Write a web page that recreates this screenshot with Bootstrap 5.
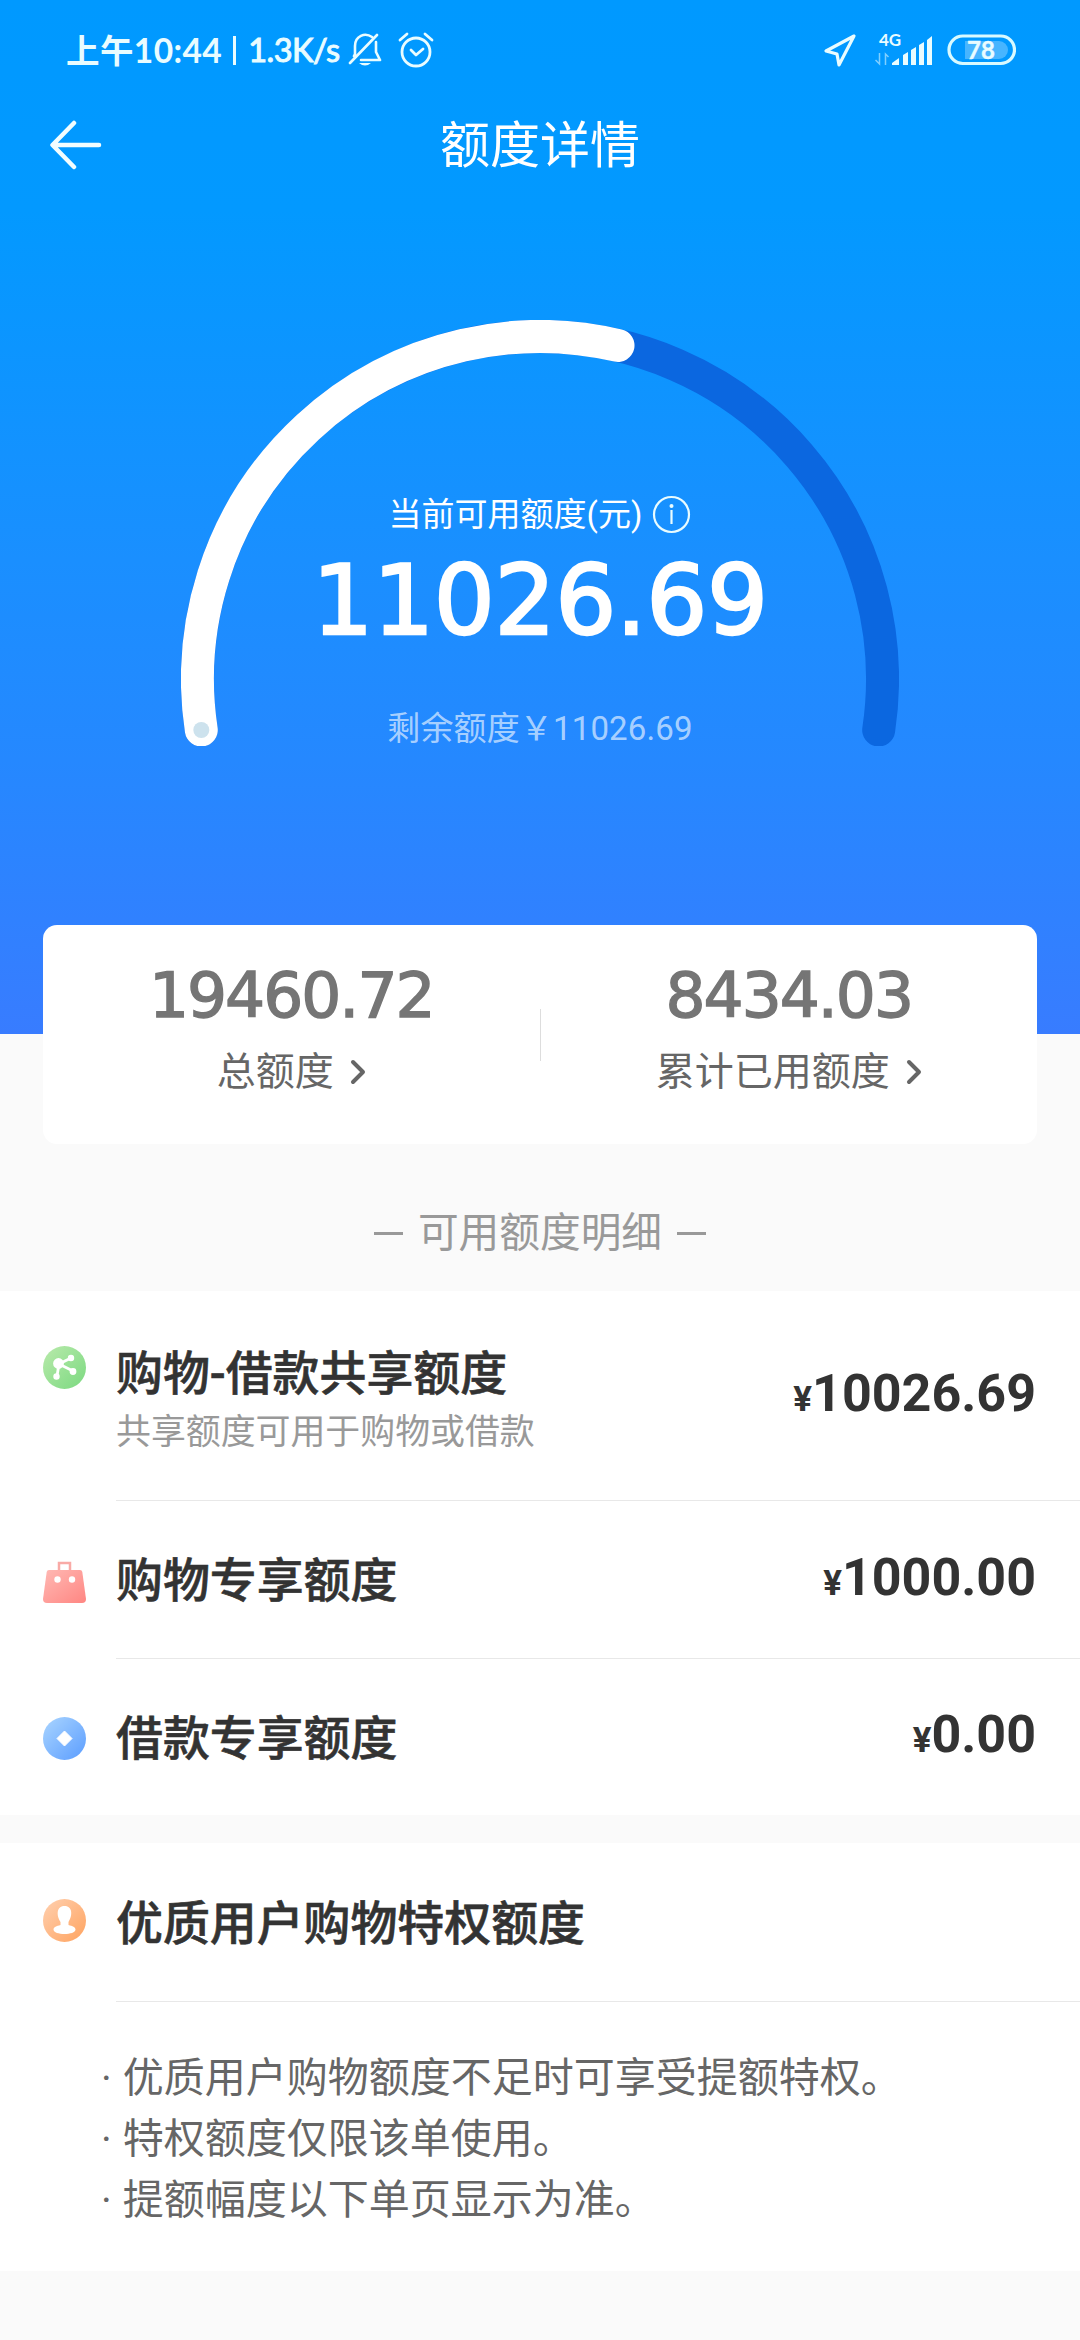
<!DOCTYPE html>
<html lang="zh-CN">
<head>
<meta charset="utf-8">
<meta name="viewport" content="width=device-width, initial-scale=1">
<title>额度详情</title>
<link href="https://cdn.jsdelivr.net/npm/bootstrap@5.3.0/dist/css/bootstrap.min.css" rel="stylesheet">
<style>
body{font-family:Roboto,"Noto Sans CJK SC",sans-serif;background:#fafafa;color:#333;line-height:1;width:1080px;height:2340px;overflow:hidden}
svg{display:block;flex:none}
.hero{height:1034px;background:linear-gradient(#0099ff 0,#0399ff 210px,#1a8fff 560px,#2588ff 760px,#387cff 1034px)}
.status{height:100px;padding:0 64px 0 66px;color:#e9fcff}
.clock{font-family:Lato,"Noto Sans CJK SC",sans-serif;font-size:33.5px;font-weight:700;line-height:40px;letter-spacing:.4px}
.rate{font-family:Lato,sans-serif;font-size:32.5px;line-height:40px;letter-spacing:-.5px;-webkit-text-stroke:1px}
.rule{width:3px;height:29px;margin:0 12px 0 11px;background:#e9fcff}
.net{margin:0 12px 0 18px}
.titlebar{height:90px;padding:0 50px}
.titlebar h1{font-size:50px;font-weight:400;line-height:60px;padding-top:2px}
.gauge{width:718px;height:426px;margin-top:130px}
.gauge-text{margin-top:-251px}
.caption{font-size:33px;line-height:38px;gap:10px}
.din{font-family:"DejaVu Sans",sans-serif;white-space:nowrap}
.total{font-size:96px;line-height:112px;letter-spacing:-.3px;-webkit-text-stroke:2.5px #fff;margin-top:11px}
.remain{font-size:33px;line-height:38px;letter-spacing:.15px;margin-top:53px;color:rgba(255,255,255,.62)}
.summary{width:994px;height:219px;margin:-109px auto 0;border-radius:14px;position:relative}
.stat{padding-top:36px}
.summary .din{font-size:63px;line-height:70px;letter-spacing:-2px;color:#757575;-webkit-text-stroke:1.4px #757575}
.summary-label{font-size:39px;line-height:44px;gap:16px;color:#666;margin-top:19px}
.vline{width:1px;height:52px;background:#ddd;margin-top:84px}
.section-head{height:147px;padding:69px 0 37px;font-size:40.7px;line-height:41px;gap:15px;color:#999}
.dash{width:29px;height:3px;background:#999}
.entry{padding-left:43px;gap:30px}
.entry-body{padding:2px 44px 0 0;height:158px}
.entry-last{height:156px}
.entry-head{height:159px}
.line{border-bottom:1px solid #e8e8e8}
.entry-tall{height:210px}
.share-icon{margin-top:55px}
.bag-icon{margin-top:5px}
.coin-icon{margin-top:3px}
.name{font-size:46.9px;font-weight:500;line-height:56px;padding-top:1px;-webkit-text-stroke:.6px}
.hint{font-size:34.9px;line-height:42px;color:#999;margin:10px 0 -6px}
.amount{font-size:52px;font-weight:700;line-height:60px}
.amount span{font-size:35px}
.gap-band{margin-top:28px}
.notes{height:269px;padding:46px 0 0 101px;font-size:41px;line-height:61px;color:#666;white-space:nowrap}
.notes li{display:flex;gap:11px}
</style>
</head>
<body>
<header class="hero text-white">
  <div class="status d-flex align-items-center">
    <span class="clock">上午10:44</span>
    <i class="rule"></i>
    <span class="rate">1.3K/s</span>
    <svg class="ms-2" width="34" height="34" viewBox="0 0 34 34" fill="none" stroke="currentColor" stroke-width="2.6" stroke-linecap="round" stroke-linejoin="round"><path d="M2 30 29 2M24 4C17-1 7 3 7 13v8l-1 2M28 9v10l4 8H13"/><path d="M11 30h12q-6 5-12 0Z" fill="currentColor" stroke="none"/></svg>
    <svg class="ms-3" width="36" height="36" viewBox="0 0 36 36" fill="none" stroke="currentColor" stroke-width="2.8" stroke-linecap="round" stroke-linejoin="round"><circle cx="18" cy="20" r="14"/><path d="m13 18 5 5 7-6M2 8l7-6M34 8l-7-6"/></svg>
    <div class="ms-auto d-flex align-items-center">
      <svg width="34" height="34" viewBox="0 0 34 34" fill="none" stroke="currentColor" stroke-width="3.2" stroke-linejoin="round"><path d="M31 3 3 18l11 3 2 11Z"/></svg>
      <svg class="net" width="60" height="40" viewBox="0 -4 60 40" fill="currentColor"><text x="4" y="11.500" font-family="Lato,sans-serif" font-weight="700" font-size="17">4G</text><path d="M4.500 19v11l-4-4M10.500 31V20l3 3" fill="none" stroke="currentColor" stroke-width="1.500" opacity=".55"/><path d="M17 31v-2l7-5v7ZM28 31V21l5-3v13ZM36 31V16l5-3v18ZM44 31V11l5-3v23ZM52 31V6l5-4v29Z"/></svg>
      <svg width="69" height="32" viewBox="0 0 69 32"><rect x="2" y="2" width="65.500" height="27.500" rx="13.750" fill="none" stroke="#d9faff" stroke-width="3.200"/><path d="M18 7h34a9 9 0 0 1 0 18H18Z" fill="#fff" opacity=".28"/><text x="34" y="24.500" text-anchor="middle" font-family="Lato,sans-serif" font-weight="700" font-size="24" stroke="#e9fcff" stroke-width=".4" fill="#e9fcff">78</text></svg>
    </div>
  </div>
  <div class="titlebar d-flex align-items-center justify-content-between">
    <svg width="52" height="50" viewBox="0 0 52 50" fill="none" stroke="#f2fdff" stroke-width="4.500" stroke-linecap="round" stroke-linejoin="round"><path d="M24 3 2.500 25 24 47M3 25h46"/></svg>
    <h1 class="m-0">额度详情</h1>
    <span style="width:52px"></span>
  </div>
  <svg class="gauge mx-auto" viewBox="181 320 718 426" fill="none" stroke-width="33" stroke-linecap="round"><path d="M201.300 730A342.500 342.500 0 1 1 878.700 730" stroke="#0b67e0"/><path d="M201.300 730A342.500 342.500 0 0 1 618 345.500" stroke="#fff"/><circle cx="201.300" cy="730" r="8" fill="#cde2ed" stroke="none"/></svg>
  <div class="gauge-text d-flex flex-column align-items-center">
    <div class="caption d-flex align-items-center"><span>当前可用额度(元)</span><svg width="39" height="39" viewBox="0 0 39 39" fill="none" stroke="#e9fcff" stroke-width="2.200"><circle cx="19.500" cy="19.500" r="17.500"/><path d="M19.500 15v14" /><circle cx="19.500" cy="11" r="2" fill="#e9fcff" stroke="none"/></svg></div>
    <div class="din total">11026.69</div>
    <div class="remain">剩余额度￥11026.69</div>
  </div>
</header>
<section class="summary bg-white d-flex">
  <div class="stat d-flex flex-column align-items-center w-50">
    <div class="din">19460.72</div>
    <div class="summary-label d-flex align-items-center"><span>总额度</span><svg width="16" height="26" viewBox="0 0 16 26" fill="none" stroke="#666" stroke-width="4" stroke-linecap="round" stroke-linejoin="round"><path d="m3 3 10 10L3 23"/></svg></div>
  </div>
  <i class="vline"></i>
  <div class="stat d-flex flex-column align-items-center w-50">
    <div class="din">8434.03</div>
    <div class="summary-label d-flex align-items-center"><span>累计已用额度</span><svg width="16" height="26" viewBox="0 0 16 26" fill="none" stroke="#666" stroke-width="4" stroke-linecap="round" stroke-linejoin="round"><path d="m3 3 10 10L3 23"/></svg></div>
  </div>
</section>
<div class="section-head d-flex justify-content-center align-items-center"><i class="dash"></i><span>可用额度明细</span><i class="dash"></i></div>
<section class="bg-white">
  <div class="entry d-flex">
    <svg class="share-icon" width="43" height="43" viewBox="0 0 43 43"><defs><linearGradient id="g1" x2="1" y2="1"><stop stop-color="#b9eaab"/><stop offset="1" stop-color="#7bd980"/></linearGradient></defs><circle cx="21.500" cy="21.500" r="21.500" fill="url(#g1)"/><g stroke="#fff" stroke-width="2.800" fill="#fff"><path d="m28 12-12 6-2 12M16 18l14 7" fill="none"/><circle cx="15.500" cy="17.500" r="4"/><circle cx="28" cy="12" r="1.800"/><circle cx="13.500" cy="30.500" r="1.800"/><circle cx="30" cy="25.500" r="2"/></g></svg>
    <div class="entry-body entry-tall line flex-grow-1 d-flex align-items-center justify-content-between"><div><div class="name">购物-借款共享额度</div><div class="hint">共享额度可用于购物或借款</div></div><div class="amount">
<span>¥</span>10026.69</div></div>
  </div>
  <div class="entry d-flex align-items-center">
    <svg class="bag-icon" width="43" height="43" viewBox="0 0 43 43"><defs><linearGradient id="g2" x2="1" y2="1"><stop stop-color="#ffb9b4"/><stop offset="1" stop-color="#ff8682"/></linearGradient></defs><path d="M16 9V2h11v7" fill="none" stroke="#f9aaa6" stroke-width="2.500"/><path d="M6 9h31q2 0 2.300 2L43 38q0 4-4 4H4q-4 0-4-4L3.700 11Q4 9 6 9Z" fill="url(#g2)"/><circle cx="14.500" cy="18.500" r="3.200" fill="#fff"/><circle cx="29" cy="18.500" r="3.200" fill="#fff"/></svg>
    <div class="entry-body line flex-grow-1 d-flex align-items-center justify-content-between"><div class="name">购物专享额度</div><div class="amount"><span>¥</span>1000.00</div></div>
  </div>
  <div class="entry d-flex align-items-center">
    <svg class="coin-icon" width="43" height="43" viewBox="0 0 43 43"><defs><linearGradient id="g3" x2="1" y2="1"><stop stop-color="#aad5ff"/><stop offset="1" stop-color="#5b9dff"/></linearGradient></defs><circle cx="21.500" cy="21.500" r="21.500" fill="url(#g3)"/><path d="m21.500 14 7.500 7.500-7.500 7.500-7.500-7.500Z" fill="#fff" stroke="#fff" stroke-linejoin="round"/></svg>
    <div class="entry-body entry-last flex-grow-1 d-flex align-items-center justify-content-between"><div class="name">借款专享额度</div><div class="amount"><span>¥</span>0.00</div></div>
  </div>
</section>
<section class="bg-white gap-band">
  <div class="entry d-flex align-items-center">
    <svg class="mb-1" width="43" height="43" viewBox="0 0 43 43"><defs><linearGradient id="g4" x2="1" y2="1"><stop stop-color="#ffd0b0"/><stop offset="1" stop-color="#ffa35f"/></linearGradient></defs><circle cx="21.500" cy="21.500" r="21.500" fill="url(#g4)"/><path d="M21.500 7c-8.500 0-8 10-4 16v3c-4 1-7 2-7 4.500 0 6 22 6 22 0 0-2.500-3-3.500-7-4.500v-3c4-6 4.500-16-4-16Z" fill="#fff"/></svg>
    <div class="entry-body entry-head line flex-grow-1 d-flex align-items-center"><div class="name">优质用户购物特权额度</div></div>
  </div>
  <ul class="notes list-unstyled m-0">
    <li><span>·</span>优质用户购物额度不足时可享受提额特权。</li>
    <li><span>·</span>特权额度仅限该单使用。</li>
    <li><span>·</span>提额幅度以下单页显示为准。</li>
  </ul>
</section>
<script src="https://cdn.jsdelivr.net/npm/bootstrap@5.3.0/dist/js/bootstrap.bundle.min.js"></script>
</body>
</html>
